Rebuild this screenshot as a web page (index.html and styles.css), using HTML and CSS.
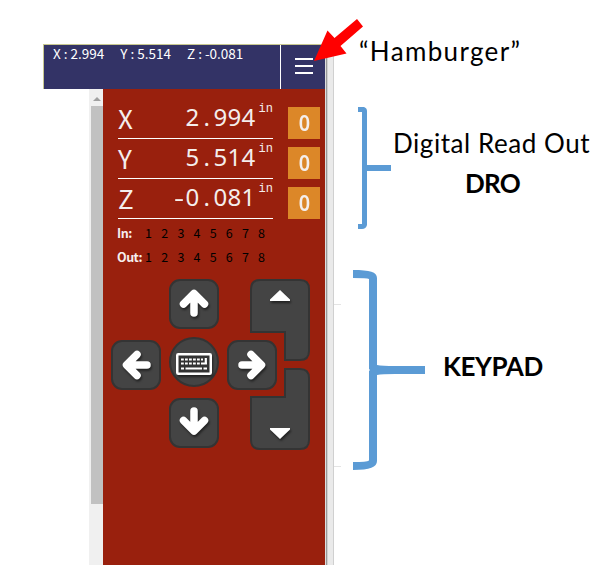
FILE: index.html
```
<!DOCTYPE html>
<html lang="en">
<head>
<meta charset="utf-8">
<title>Pendant display</title>
<link rel="stylesheet" href="styles.css">
</head>
<body>
<main class="page">
  <section class="device">
    <header class="topbar">
      <div class="coords"><span>X : 2.994</span><span>Y : 5.514</span><span>Z : -0.081</span></div>
      <div class="menu"><i></i><i></i><i></i></div>
    </header>
    <div class="body">
      <div class="scrollbar"><div class="scroll-up"></div><div class="thumb"></div></div>
      <div class="panel">
        <div class="dro">
          <div class="axis"><div class="readout"><span class="name">X</span><span class="value">2<b>.</b>994</span><span class="unit">in</span></div><div class="zero"><span>0</span></div></div>
          <div class="axis"><div class="readout"><span class="name">Y</span><span class="value">5<b>.</b>514</span><span class="unit">in</span></div><div class="zero"><span>0</span></div></div>
          <div class="axis"><div class="readout"><span class="name">Z</span><span class="value"><b class="minus">-</b>0<b>.</b>081</span><span class="unit">in</span></div><div class="zero"><span>0</span></div></div>
        </div>
        <div class="io"><strong>In:</strong><span>1</span><span>2</span><span>3</span><span>4</span><span>5</span><span>6</span><span>7</span><span>8</span></div>
        <div class="io"><strong>Out:</strong><span>1</span><span>2</span><span>3</span><span>4</span><span>5</span><span>6</span><span>7</span><span>8</span></div>
        <div class="keypad">
          <div class="key up"><svg class="arrow" viewBox="0 0 50 50"><path d="M25 34V16M14.500 25L25 14.500L35.500 25"/></svg></div>
          <div class="key left"><svg class="arrow" viewBox="0 0 50 50"><path d="M36 25H17M26 14.500L15.500 25L26 35.500"/></svg></div>
          <div class="key board"><svg viewBox="0 0 36 22">
            <rect x="1.250" y="1.250" width="33.500" height="19.500" rx="1" fill="#333" stroke="#fff" stroke-width="2.500"/>
            <path d="M5 6.500H27M5 10.500H26" stroke="#fff" stroke-width="2.200" stroke-dasharray="2.800 1.200"/>
            <path d="M5 15.500H8M9.500 15.500H26M27.500 15.500H31M26 10.500H31M29.800 5V11.500" stroke="#fff" stroke-width="2.200"/>
          </svg></div>
          <div class="key right"><svg class="arrow" viewBox="0 0 50 50"><path d="M15 25H33M24 14.500L34.500 25L24 35.500"/></svg></div>
          <div class="key down"><svg class="arrow" viewBox="0 0 50 50"><path d="M25 13V31M14.500 22.500L25 33L35.500 22.500"/></svg></div>
          <svg class="zkeys" viewBox="0 0 60 171">
            <g fill="#444" stroke="#343434" stroke-width="2">
              <path d="M1 53V10Q1 1 10 1H50Q59 1 59 10V72Q59 81 50 81H35V53Z"/>
              <path d="M1 118V161Q1 170 10 170H50Q59 170 59 161V99Q59 90 50 90H35V118Z"/>
            </g>
            <path class="tri" d="M30 11L40 20.500V22H20V20.500ZM30 160L40 150.500V149H20V150.500Z"/>
          </svg>
        </div>
      </div>
      <div class="rail"></div>
    </div>
  </section>
  <aside class="notes">
    <p class="burger">“Hamburger”</p>
    <p class="read">Digital Read Out</p>
    <p class="bold dro-label">DRO</p>
    <p class="bold keypad-label">KEYPAD</p>
  </aside>
  <svg class="marks" viewBox="0 0 615 581">
    <path d="M325 44H334V565H325Z" fill="#eaeaea"/>
    <path d="M325.500 44V565" stroke="#dedede"/><path d="M326.500 44V565" stroke="#999"/><path d="M327.500 44V565M333.500 44V565" stroke="#d0d0d0"/>
    <path d="M334 304.500H341M334 466.500H341" stroke="#e4e4e4"/>
    <path d="M314 61L327.500 30.500L334.500 38L357 19L363 26.500L340.500 46L346.500 53.500Z" fill="#f00"/>
    <path d="M358 107H364Q367 108 367 111V165H391V171H367V225Q366 229 362 229H358V224H362V112H358Z" fill="#5b9bd5"/>
    <path d="M353 270C370 270 377 272 377 278V365Q382 366 395 366H425V374H395Q382 374 377 375V461C377 467 370 470 353 470V462Q367 462 369 460.500V371L370 370L369 369V279Q367 278 353 278Z" fill="#5b9bd5"/>
  </svg>
</main>
</body>
</html>
```
FILE: styles.css
```
* { box-sizing: border-box; }
body { margin: 0; background: #fff; }
.page { position: relative; display: flex; width: 615px; height: 581px; overflow: hidden; font-family: "Noto Sans CJK SC", sans-serif; }
.device { width: 291px; height: 521px; margin: 44px 0 0 43px; flex: none; }
.topbar { display: flex; width: 282px; height: 45px; background: #333366; border-top: 1px solid #c8c890; border-left: 1px solid #c8c890; color: #fff; }
.coords { display: flex; width: 236px; gap: 16px; padding: 0 0 0 9px; font-size: 13.5px; line-height: 17px; white-space: nowrap; }
.menu { display: flex; flex-direction: column; gap: 5px; flex: 1; border-left: 1px solid #fff; padding: 13px 0 0 14px; }
.menu i { width: 18px; height: 2px; background: #fff; }
.body { display: flex; height: 476px; padding-left: 46px; }
.scrollbar { width: 14px; background: #f0f0f0; flex: none; padding-left: 2px; }
.scroll-up { height: 17px; padding: 8px 0 0 2px; }
.scroll-up::before { content: ""; display: block; width: 8px; height: 4px; background: #a0a0a0; clip-path: polygon(50% 0, 100% 100%, 0 100%); }
.thumb { height: 398px; background: #c1c1c1; }
.panel { width: 222px; flex: none; background: #99200d; color: #f4eeec; }
.dro { padding: 18px 5px 0 15px; }
.axis { display: flex; justify-content: space-between; width: 202px; height: 40px; }
.readout { display: flex; width: 155px; height: 32px; border-bottom: 1px solid #fff; }
.name { width: 22px; font-size: 26px; line-height: 21px; }
.value { width: 116px; text-align: right; font: 24px/20px "Noto Sans", sans-serif; letter-spacing: .27px; white-space: nowrap; }
.value b { display: inline-block; width: 14px; text-align: center; font-weight: 400; letter-spacing: 0; }
.value .minus { transform: scaleX(1.3); }
.unit { font: 12px/5px "Liberation Mono", monospace; padding-left: 3px; }
.zero { width: 32px; height: 32px; background: #dc8728; text-align: center; font: 600 22px/31px "Noto Sans", sans-serif; }
.zero span { display: inline-block; transform: scaleX(.9); }
.io { display: flex; height: 24px; padding-left: 14px; font-size: 12.500px; line-height: 12px; color: #000; }
.io strong { width: 23.500px; color: #f6eeee; white-space: nowrap; letter-spacing: -.5px; }
.io span { width: 16.150px; text-align: center; }
.keypad { position: relative; display: grid; grid-template-columns: repeat(3, 50px); grid-template-rows: 50px 50px 50px; column-gap: 8px; row-gap: 9.500px; padding: 0 0 0 8px; margin-top: 4px; }
.key { width: 50px; height: 50px; border: 2px solid #343434; border-radius: 11px; background: #444; display: grid; place-items: center; }
.key svg { grid-area: 1 / 1; }
.arrow { width: 50px; height: 50px; margin: -2px; fill: none; stroke: #fff; stroke-width: 7.500; stroke-linecap: round; stroke-linejoin: round; filter: drop-shadow(1px 2px 1px #222); }
.up { grid-area: 1 / 2; }
.left { grid-area: 2 / 1; margin-top: 1.500px; }
.board { grid-area: 2 / 2; border-radius: 50%; margin-top: -1.500px; }
.board svg { width: 36px; height: 22px; margin-top: 4px; fill: none; filter: drop-shadow(1px 2px 1px #222); }
.right { grid-area: 2 / 3; margin-top: 1.500px; }
.down { grid-area: 3 / 2; }
.zkeys { position: absolute; left: 147px; top: 0; width: 60px; height: 171px; }
.tri { fill: #fff; filter: drop-shadow(1px 2px 1px #222); }
.rail { width: 9px; background: #eaeaea; }
.notes { width: 281px; flex: none; padding-top: 35px; color: #000; font-family: Lato, sans-serif; font-size: 26px; line-height: 32px; white-space: nowrap; }
.notes p { margin: 0; }
.burger { padding-left: 25px; letter-spacing: 1.350px; }
.notes .read { margin-top: 60px; padding-left: 59px; letter-spacing: .550px; }
.bold { font-weight: 700; }
.notes .dro-label { margin-top: 8px; padding-left: 131px; letter-spacing: -.7px; }
.notes .keypad-label { margin-top: 151px; padding-left: 109px; letter-spacing: -.4px; }
.marks { position: absolute; left: 0; top: 0; width: 615px; height: 581px; pointer-events: none; }
```
